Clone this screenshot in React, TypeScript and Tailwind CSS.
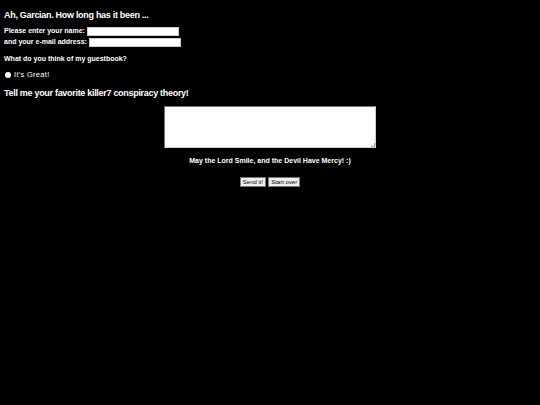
import React from "react";

export default function App() {
  const f = { fontFamily: '"Comic Sans MS", "Liberation Sans", sans-serif' };
  return (
    <div className="w-[540px] h-[405px] bg-black text-white overflow-hidden" style={f}>
      <div className="pl-[4px]">
        <div className="mt-[8px] h-[14px] leading-[14px] text-[9px] tracking-[-0.3px] font-bold">Ah, Garcian. How long has it been ...</div>
        <div className="mt-[4px] h-[11px] flex items-center text-[7px] font-bold">
          <span>Please enter your name:</span>
          <div className="ml-[2px] w-[92px] h-[9px] bg-white border border-[#ccc]" />
        </div>
        <div className="h-[11px] flex items-center text-[7px] font-bold">
          <span>and your e-mail address:</span>
          <div className="ml-[2px] w-[92px] h-[9px] bg-white border border-[#ccc]" />
        </div>
        <div className="mt-[5px] h-[11px] leading-[11px] text-[7px] font-bold">What do you think of my guestbook?</div>
        <div className="mt-[5px] h-[11px] flex items-center text-[7.5px] tracking-[0.3px]">
          <span className="ml-[1px] w-[6px] h-[6px] rounded-full bg-white" />
          <span className="ml-[3px]">It's Great!</span>
        </div>
        <div className="mt-[6px] h-[14px] leading-[14px] text-[9px] tracking-[-0.3px] font-bold">Tell me your favorite killer7 conspiracy theory!</div>
      </div>
      <div className="flex flex-col items-center">
        <div className="mt-[6px] w-[212px] h-[42px] bg-white border border-t-[#767676] border-l-[#767676] border-r-[#cfcfcf] border-b-[#cfcfcf] relative">
          <div className="absolute right-0 bottom-0 w-[4px] h-[4px] border-r border-b border-[#aaa]" />
        </div>
        <div className="mt-[7px] h-[12px] leading-[12px] text-[7px] font-bold">May the Lord Smile, and the Devil Have Mercy! :)</div>
        <div className="mt-[10px] flex gap-[2px]">
          <button className="h-[10px] px-[2px] bg-[#efefef] text-black text-[6px] leading-[8px] border border-[#767676]" style={{ fontFamily: '"Liberation Sans", sans-serif' }}>Send it!</button>
          <button className="h-[10px] px-[2px] bg-[#efefef] text-black text-[6px] leading-[8px] border border-[#767676]" style={{ fontFamily: '"Liberation Sans", sans-serif' }}>Start over</button>
        </div>
      </div>
    </div>
  );
}
